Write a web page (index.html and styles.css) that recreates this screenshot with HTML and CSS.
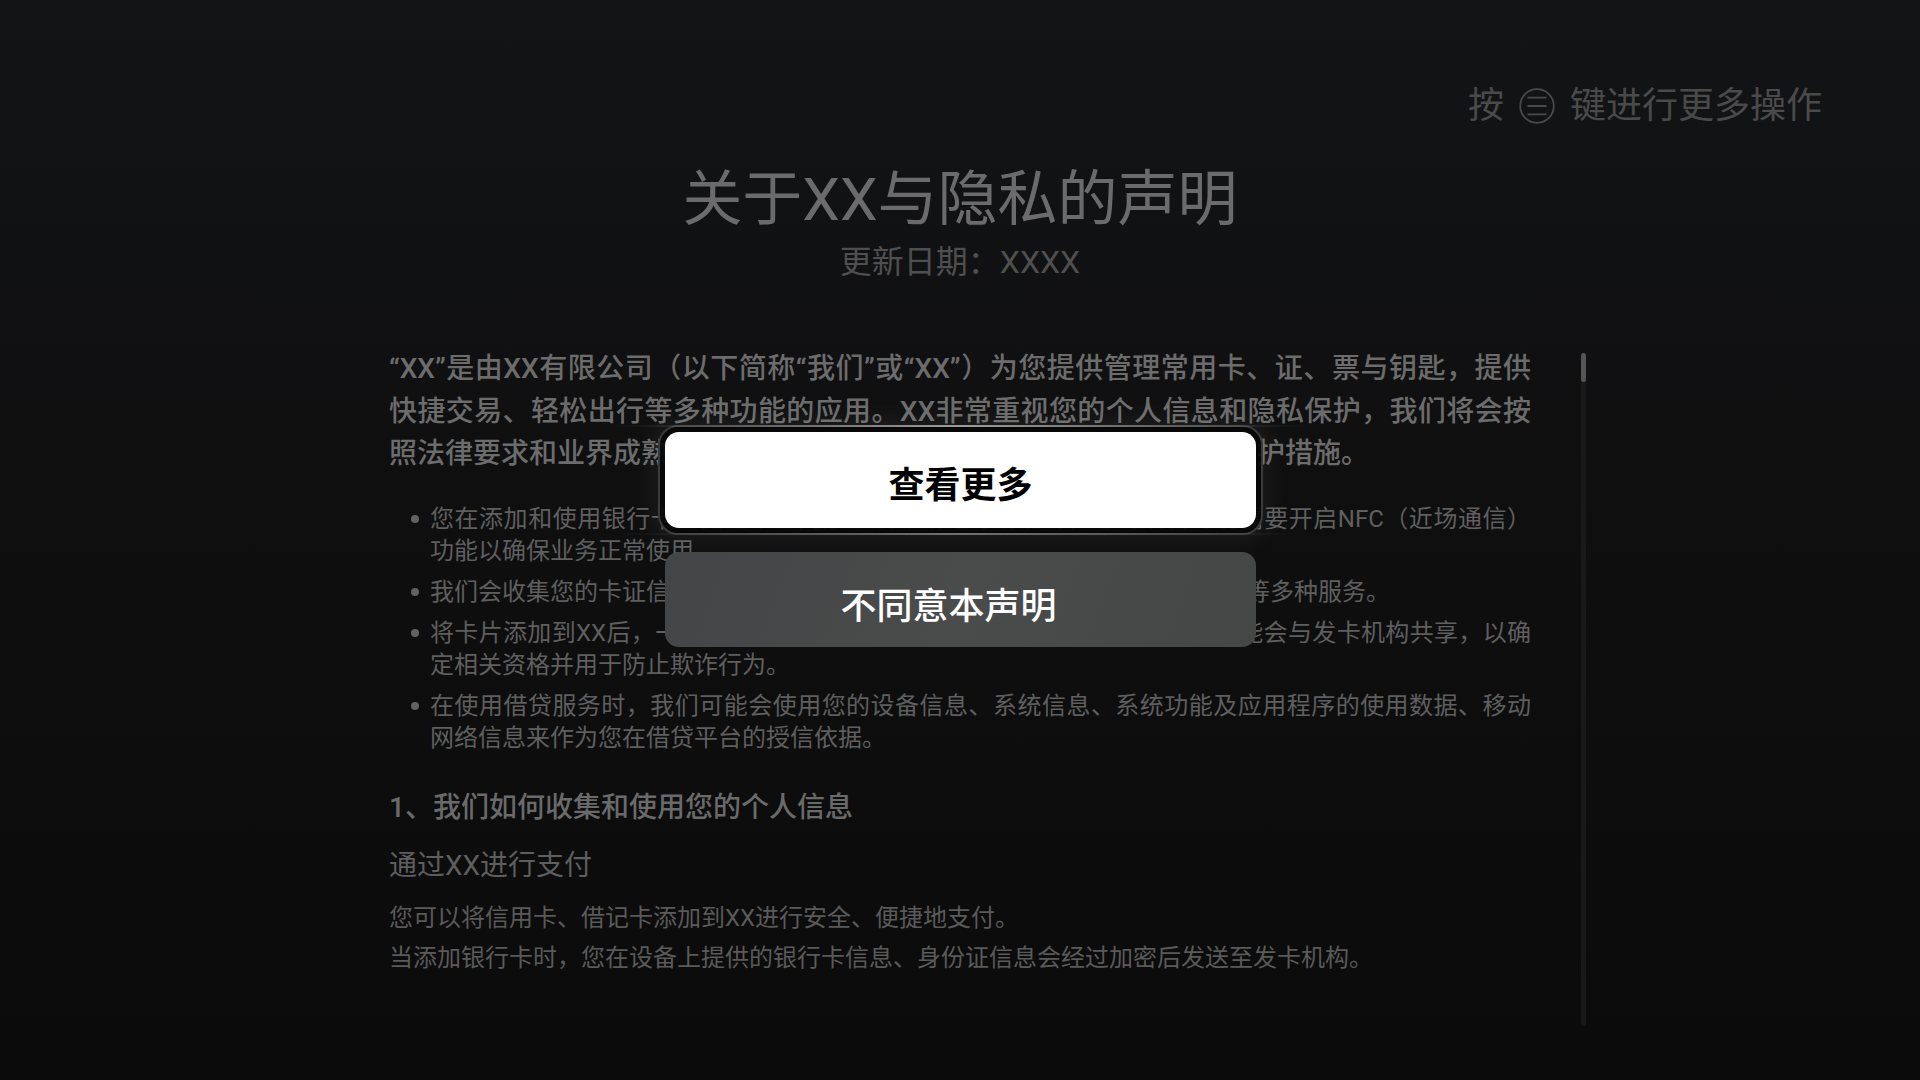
FILE: index.html
```html
<!DOCTYPE html>
<html lang="zh-CN">
<head>
<meta charset="utf-8">
<title>关于XX与隐私的声明</title>
<link rel="stylesheet" href="styles.css">
</head>
<body>
<div class="page">
  <header class="topbar">
    <div class="hint">
      <span>按</span>
      <svg class="menu-key" viewBox="0 0 36 36" aria-hidden="true">
        <circle cx="18" cy="18" r="16.8" fill="none" stroke="#4a4a4a" stroke-width="1.8"/>
        <path d="M8.5 9.6H27.5M8.5 18H27.5M8.5 26.4H27.5" stroke="#4a4a4a" stroke-width="1.8" fill="none"/>
      </svg>
      <span>键进行更多操作</span>
    </div>
  </header>

  <h1 class="title">关于XX与隐私的声明</h1>
  <p class="updated">更新日期：XXXX</p>

  <div class="doc">
    <article class="content">
      <p class="lead">“XX”是由XX有限公司（以下简称“我们”或“XX”）为您提供管理常用卡、证、票与钥匙，提供快捷交易、轻松出行等多种功能的应用。XX非常重视您的个人信息和隐私保护，我们将会按照法律要求和业界成熟的安全标准，为您的个人信息提供相应的安全保护措施。</p>
      <ul class="points">
        <li>您在添加和使用银行卡、交通卡、门禁卡及车钥匙等功能时，您的设备可能需要开启NFC（近场通信）功能以确保业务正常使用。</li>
        <li>我们会收集您的卡证信息，用于为您提供卡片的添加、管理、快捷支付、出行等多种服务。</li>
        <li>将卡片添加到XX后，一些必要的卡片信息（如卡号、有效期、手机号等）可能会与发卡机构共享，以确定相关资格并用于防止欺诈行为。</li>
        <li>在使用借贷服务时，我们可能会使用您的设备信息、系统信息、系统功能及应用程序的使用数据、移动网络信息来作为您在借贷平台的授信依据。</li>
      </ul>
      <h2 class="section">1、我们如何收集和使用您的个人信息</h2>
      <h3 class="sub">通过XX进行支付</h3>
      <p class="body">您可以将信用卡、借记卡添加到XX进行安全、便捷地支付。</p>
      <p class="body">当添加银行卡时，您在设备上提供的银行卡信息、身份证信息会经过加密后发送至发卡机构。</p>
    </article>
    <div class="scrollbar"><div class="thumb"></div></div>
  </div>
</div>

<div class="dialog">
  <div class="focus">
    <div class="ring"></div>
    <div class="shine top"></div>
    <div class="shine bottom"></div>
    <button class="btn btn-primary">查看更多</button>
  </div>
  <button class="btn btn-secondary">不同意本声明</button>
</div>
</body>
</html>
```

FILE: styles.css
```css
html, body {
  margin: 0;
  padding: 0;
}

body {
  width: 1920px;
  height: 1080px;
  overflow: hidden;
  position: relative;
  background: linear-gradient(180deg, #131416 0%, #0f0f10 45%, #0b0b0b 100%);
  font-family: Roboto, "Noto Sans CJK SC", sans-serif;
}

.page {
  display: flex;
  flex-direction: column;
  align-items: center;
  padding-top: 82px;
}

.topbar {
  align-self: stretch;
  display: flex;
  justify-content: flex-end;
  padding-right: 98px;
}

.hint {
  display: flex;
  align-items: center;
  font-size: 36px;
  line-height: 48px;
  color: #4a4a4a;
}

.menu-key {
  width: 36px;
  height: 36px;
  margin: 0 15px;
}

.title {
  margin: 30px 0 0;
  font-size: 60px;
  line-height: 80px;
  font-weight: 400;
  color: #6b6b6b;
}

.updated {
  margin: 2px 0 0;
  font-size: 32px;
  line-height: 40px;
  color: #4f4f4f;
}

.doc {
  align-self: flex-start;
  margin-left: 389px;
  margin-top: 66px;
  display: flex;
  gap: 50px;
}

.content {
  width: 1142px;
}

.lead {
  margin: 0;
  font-size: 28px;
  line-height: 42.5px;
  font-weight: 500;
  color: #6c6c6c;
  text-align: justify;
}

.points {
  list-style: none;
  margin: 27px 0 0;
  padding: 0 0 0 41px;
  display: flex;
  flex-direction: column;
  gap: 9px;
}

.points li {
  position: relative;
  font-size: 24px;
  line-height: 32px;
  color: #5f5f5f;
  text-align: justify;
}

.points li::before {
  content: "";
  position: absolute;
  left: -19px;
  top: 12px;
  width: 8px;
  height: 8px;
  border-radius: 50%;
  background: #626262;
}

.section {
  margin: 34px 0 0;
  font-size: 28px;
  line-height: 40px;
  font-weight: 500;
  color: #6a6a6a;
}

.sub {
  margin: 18px 0 0;
  font-size: 28px;
  line-height: 40px;
  font-weight: 400;
  color: #5e5e5e;
}

.body {
  margin: 12px 0 0;
  font-size: 24px;
  line-height: 40px;
  color: #5a5a5a;
}

.body + .body {
  margin-top: 0;
}

.scrollbar {
  flex: none;
  width: 5px;
  height: 673px;
  margin-top: 5px;
  background: #19191a;
  border-radius: 3px;
}

.thumb {
  width: 5px;
  height: 29px;
  background: #555555;
  border-radius: 3px;
}

/* dialog overlay */
.dialog {
  position: absolute;
  top: 432px;
  left: 665px;
  width: 591px;
  display: flex;
  flex-direction: column;
  gap: 24px;
}

.focus {
  position: relative;
}

.ring {
  position: absolute;
  inset: -7px;
  border: 2px solid #3a3a3a;
  border-radius: 20px;
  background: rgba(8, 8, 8, 0.93);
  box-shadow: 0 0 24px 6px rgba(255, 255, 255, 0.06);
}

.shine {
  position: absolute;
  left: -50px;
  right: -50px;
  height: 2px;
  background: linear-gradient(90deg, rgba(255,255,255,0) 0%, rgba(255,255,255,0.5) 50%, rgba(255,255,255,0) 100%);
}

.shine.top {
  top: -7px;
}

.shine.bottom {
  bottom: -7px;
  opacity: 0.55;
}

.btn {
  position: relative;
  display: flex;
  align-items: center;
  justify-content: center;
  width: 100%;
  border: none;
  margin: 0;
  padding: 0;
  border-radius: 14px;
  font-family: Roboto, "Noto Sans CJK SC", sans-serif;
  font-size: 36px;
}

.btn-primary {
  height: 96px;
  padding-top: 4px;
  background: #ffffff;
  color: #000000;
  font-weight: 700;
}

.btn-secondary {
  height: 95px;
  padding-top: 6px;
  padding-right: 24px;
  background: linear-gradient(110deg, #444546 0%, #4a4b4b 50%, #454646 100%);
  color: #ffffff;
  font-weight: 500;
}
```
